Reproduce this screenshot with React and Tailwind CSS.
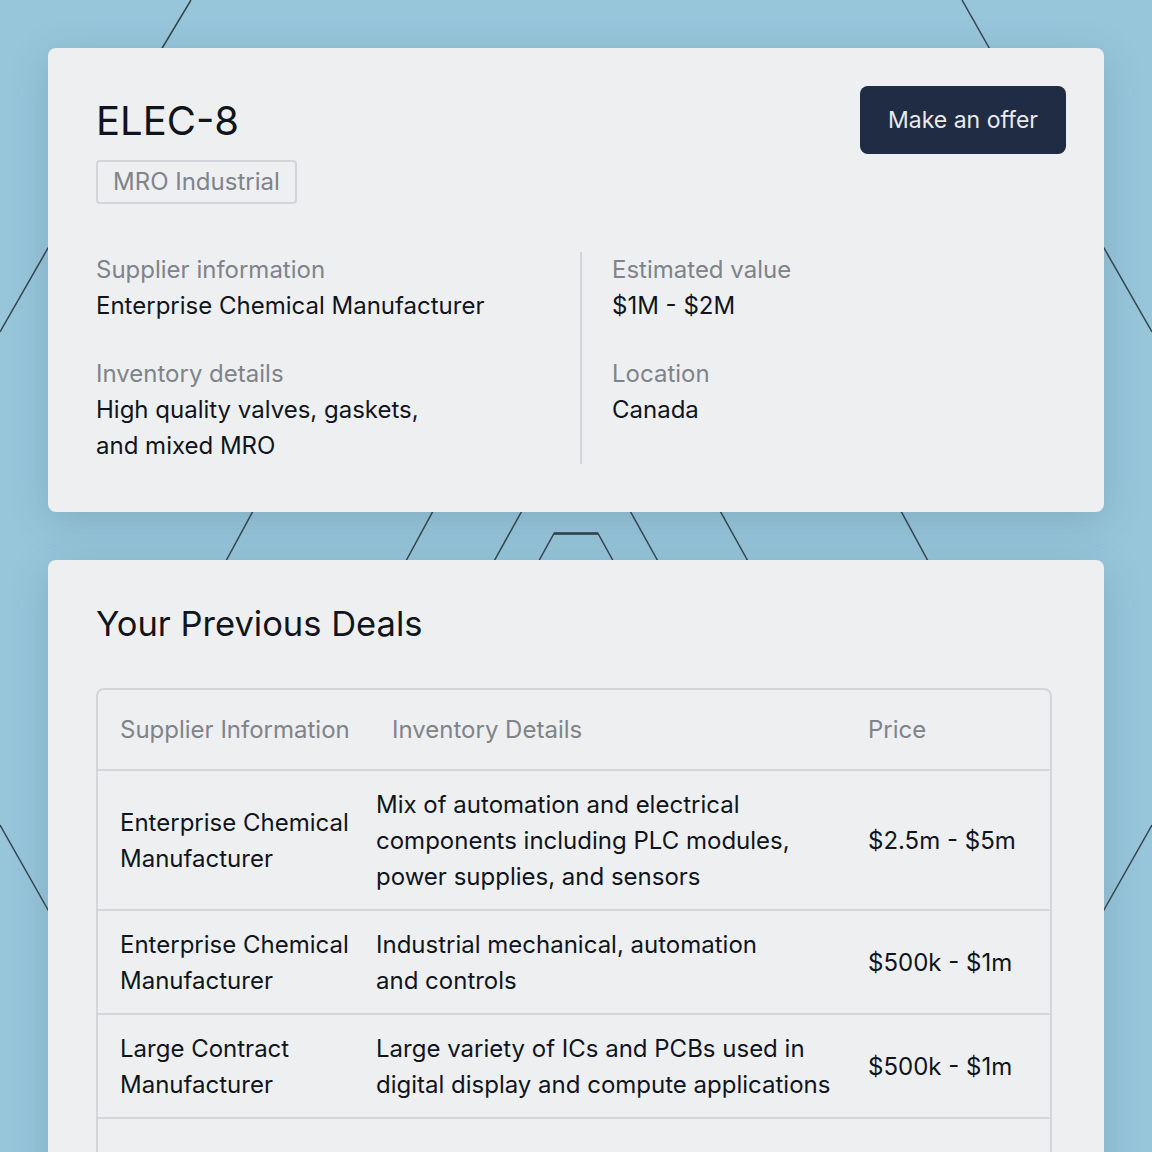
const deals = [
  {
    supplier: ["Enterprise Chemical", "Manufacturer"],
    details: ["Mix of automation and electrical", "components including PLC modules,", "power supplies, and sensors"],
    price: "$2.5m - $5m",
  },
  {
    supplier: ["Enterprise Chemical", "Manufacturer"],
    details: ["Industrial mechanical, automation", "and controls"],
    price: "$500k - $1m",
  },
  {
    supplier: ["Large Contract", "Manufacturer"],
    details: ["Large variety of ICs and PCBs used in", "digital display and compute applications"],
    price: "$500k - $1m",
  },
];

function Lines({ items }) {
  return items.map((line, i) => (
    <span key={i} className="block">
      {line}
    </span>
  ));
}

function Backdrop() {
  return (
    <svg className="absolute inset-0 h-full w-full" viewBox="0 0 1152 1152" fill="none">
      <g stroke="#34444f" strokeWidth="1.5">
        <line x1="191" y1="0" x2="155" y2="60" />
        <line x1="962" y1="0" x2="996" y2="60" />
        <line x1="0" y1="332" x2="60" y2="227" />
        <line x1="0" y1="825" x2="60" y2="931" />
        <line x1="1152" y1="332" x2="1092" y2="227" />
        <line x1="1152" y1="825" x2="1092" y2="931" />
        <line x1="259" y1="500" x2="220" y2="572" />
        <line x1="439" y1="500" x2="400" y2="572" />
        <line x1="528" y1="500" x2="488" y2="572" />
        <line x1="624" y1="500" x2="664" y2="572" />
        <line x1="714" y1="500" x2="754" y2="572" />
        <line x1="895" y1="500" x2="934" y2="572" />
        <polyline points="536,566 554,533.5 598,533.5 616,566" />
      </g>
      <line x1="554" y1="533.5" x2="598" y2="533.5" stroke="#34444f" strokeWidth="2.5" />
    </svg>
  );
}

export default function App() {
  return (
    <div
      className="relative h-[1152px] w-full overflow-hidden bg-[#97c5da] text-[#10151c]"
      style={{ fontFamily: "Inter, 'Noto Sans', sans-serif" }}
    >
      <Backdrop />

      <div className="relative flex flex-col gap-12 px-12 pt-12">
        <section className="rounded-lg bg-[#eeeff1] px-12 pb-12 pt-12 shadow-[0_10px_40px_rgba(40,70,90,0.18)]">
          <div className="flex items-start justify-between">
            <div>
              <h1 className="text-[40px] leading-[50px]">ELEC-8</h1>
              <span className="mt-[14px] inline-block rounded-[4px] border-2 border-[#d3d5da] px-[15px] py-[2px] text-[24px] leading-9 text-[#808389]">
                MRO Industrial
              </span>
            </div>
            <button className="-mr-[10px] -mt-[10px] rounded-lg bg-[#1f2c44] px-7 py-4 text-[23px] leading-9 text-[#e8eaee]">
              Make an offer
            </button>
          </div>

          <div className="mt-12 grid grid-cols-[484px_1fr] text-[24px] leading-9">
            <div className="flex flex-col gap-8">
              <div>
                <p className="text-[#808389]">Supplier information</p>
                <p>Enterprise Chemical Manufacturer</p>
              </div>
              <div>
                <p className="text-[#808389]">Inventory details</p>
                <p>
                  High quality valves, gaskets,
                  <br />
                  and mixed MRO
                </p>
              </div>
            </div>
            <div className="flex flex-col gap-8 border-l-2 border-[#d3d5da] pl-[30px]">
              <div>
                <p className="text-[#808389]">Estimated value</p>
                <p>$1M - $2M</p>
              </div>
              <div>
                <p className="text-[#808389]">Location</p>
                <p>Canada</p>
              </div>
            </div>
          </div>
        </section>

        <section className="rounded-lg bg-[#eeeff1] px-12 pb-12 pt-11 shadow-[0_10px_40px_rgba(40,70,90,0.18)]">
          <h2 className="text-[34.5px] leading-10">Your Previous Deals</h2>

          <div className="mt-11 w-[956px] rounded-lg border-2 border-[#d3d5da] text-[24px] leading-9">
            <div className="grid grid-cols-[256px_492px_1fr] border-b-2 border-[#d3d5da] pb-[21px] pt-[22px] text-[#808389]">
              <div className="pl-[22px]">Supplier Information</div>
              <div className="pl-[38px]">Inventory Details</div>
              <div className="pl-[22px]">Price</div>
            </div>
            {deals.map((deal, i) => (
              <div
                key={i}
                className="grid grid-cols-[256px_492px_1fr] items-center border-b-2 border-[#d3d5da] pb-[14px] pt-4"
              >
                <div className="pl-[22px]">
                  <Lines items={deal.supplier} />
                </div>
                <div className="pl-[22px]">
                  <Lines items={deal.details} />
                </div>
                <div className="pl-[22px]">{deal.price}</div>
              </div>
            ))}
            <div className="h-24" />
          </div>
        </section>
      </div>
    </div>
  );
}
